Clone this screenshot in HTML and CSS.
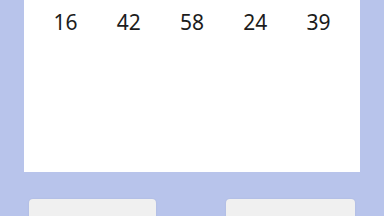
FILE: index.html
```html
<!DOCTYPE html>
<html lang="en">
<head>
    <meta charset="UTF-8">
    <meta name="viewport" content="width=device-width, initial-scale=1.0">
    <title>Numbers</title>
    <link rel="stylesheet" href="styles.css">
</head>
<body>
    <div class="panel">
        <div class="numbers">
            <span>16</span>
            <span>42</span>
            <span>58</span>
            <span>24</span>
            <span>39</span>
        </div>
    </div>
    <div class="actions">
        <button class="btn btn-left"></button>
        <button class="btn btn-right"></button>
    </div>
</body>
</html>
```

FILE: styles.css
```css
body {
    font-family: "Noto Sans", "Open Sans", sans-serif;
    margin: 0;
    width: 384px;
    height: 216px;
    overflow: hidden;
    background-color: #b8c4eb;
}
.panel {
    margin: 0 24px;
    height: 172px;
    background: #fff;
}
.numbers {
    display: grid;
    grid-template-columns: repeat(5, 1fr);
    padding: 7px 10px 0;
    font-size: 21px;
    line-height: 30px;
    color: #1c1c1c;
    text-align: center;
}
.actions {
    display: flex;
    justify-content: space-between;
    padding: 27px 29px 0 29px;
}
.btn {
    height: 30px;
    border: none;
    border-radius: 4px;
    background: #f0f0f0;
    box-shadow: 0 0 2px rgba(0,0,0,0.08);
}
.btn-left {
    width: 127px;
}
.btn-right {
    width: 129px;
}
```
